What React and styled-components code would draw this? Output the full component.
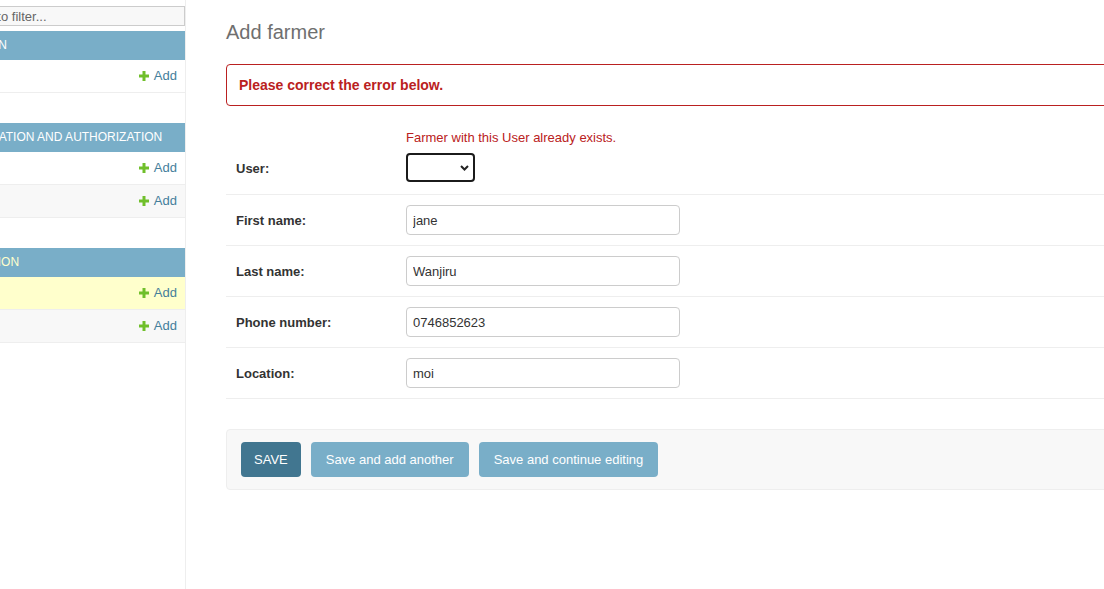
import { useLayoutEffect, useRef } from "react";
import styled, { createGlobalStyle } from "styled-components";

const GlobalStyle = createGlobalStyle`
  *, *::before, *::after {
    box-sizing: border-box;
  }
  html, body {
    margin: 0;
    padding: 0;
    background: #fff;
    overflow: hidden;
  }
  body {
    font-family: "Liberation Sans", Arial, sans-serif;
    font-size: 14px;
    color: #333;
  }
`;

// the page is scrolled sideways a bit, like the reference
const SCROLL_X = 78;

const Viewport = styled.div`
  width: 100vw;
  height: 100vh;
  overflow: hidden;
`;

const Page = styled.div`
  display: flex;
  width: 1500px;
  min-height: 100%;
`;

const Sidebar = styled.nav`
  flex: 0 0 264px;
  border-right: 1px solid #eee;
`;

const FilterInput = styled.input`
  display: block;
  width: 100%;
  height: 20px;
  margin: 6px 0 5px;
  padding: 2px 5px;
  border: 1px solid #ccc;
  background: #f8f8f8;
  font-family: inherit;
  font-size: 13px;
  color: #333;
  &::placeholder {
    color: #666;
  }
`;

const Module = styled.div`
  margin-bottom: 30px;
`;

const Caption = styled.div`
  padding: 8px;
  background: #79aec8;
  color: ${(p) => (p.current ? "#ffc" : "#fff")};
  font-size: 12px;
  line-height: 13px;
  text-transform: uppercase;
`;

const ModelRow = styled.div`
  display: flex;
  justify-content: space-between;
  align-items: center;
  padding: 8px;
  border-bottom: 1px solid #eee;
  background: ${(p) => (p.current ? "#ffc" : p.alt ? "#f8f8f8" : "#fff")};
  font-size: 13px;
  line-height: 16px;
`;

const ModelLink = styled.a`
  color: #447e9b;
  text-decoration: none;
`;

const AddLink = styled.a`
  display: flex;
  align-items: center;
  gap: 5px;
  color: #447e9b;
  text-decoration: none;
`;

const Main = styled.main`
  flex: 1;
  padding: 20px 40px;
`;

const Title = styled.h1`
  margin: 0 0 19px;
  font-size: 20px;
  line-height: 25px;
  font-weight: 300;
  color: #6f6f6f;
`;

const ErrorNote = styled.p`
  margin: 0 0 14px;
  padding: 10px 12px;
  border: 1px solid #ba2121;
  border-radius: 4px;
  color: #ba2121;
  font-size: 14px;
  line-height: 20px;
  font-weight: 700;
`;

const FormRow = styled.div`
  display: grid;
  grid-template-columns: 170px 1fr;
  align-items: center;
  padding: 10px;
  border-bottom: 1px solid #eee;
`;

const Label = styled.label`
  grid-column: 1;
  font-size: 13px;
  font-weight: 700;
  color: #333;
`;

const ErrorList = styled.div`
  grid-column: 2;
  margin: 0 0 7px;
  color: #ba2121;
  font-size: 13px;
  line-height: 16px;
`;

const TextInput = styled.input`
  width: 274px;
  height: 30px;
  padding: 5px 6px;
  border: 1px solid #ccc;
  border-radius: 4px;
  font-family: inherit;
  font-size: 13px;
  color: #333;
`;

const SelectBox = styled.div`
  position: relative;
  width: 69px;
  height: 29px;
  margin-bottom: 2px;
  > svg {
    position: absolute;
    right: 6px;
    top: 12px;
    pointer-events: none;
  }
`;

const Select = styled.select`
  appearance: none;
  width: 100%;
  height: 100%;
  border: 2px solid #1b1b1b;
  border-radius: 4px;
  background: #fff;
  font-family: inherit;
  font-size: 13px;
`;

const SubmitRow = styled.div`
  display: flex;
  gap: 10px;
  margin-top: 30px;
  padding: 12px 14px;
  background: #f8f8f8;
  border: 1px solid #eee;
  border-radius: 4px;
`;

const Button = styled.button`
  height: 35px;
  padding: 0 ${(p) => (p.primary ? "13px" : "15px")};
  border: none;
  border-radius: 4px;
  background: ${(p) => (p.primary ? "#417690" : "#79aec8")};
  color: #fff;
  font-family: inherit;
  font-size: 13px;
`;

const PlusIcon = () => (
  <svg width="10" height="10" viewBox="0 0 10 10">
    <path d="M3.5 0h3v3.5H10v3H6.5V10h-3V6.5H0v-3h3.5z" fill="#70bf2b" />
  </svg>
);

const apps = [
  { name: "Auth Token", models: ["Tokens"] },
  { name: "Authentication and Authorization", models: ["Groups", "Users"] },
  { name: "Registration", models: ["Farmers", "Produces"], current: 0 },
];

const fields = [
  { label: "First name:", value: "jane" },
  { label: "Last name:", value: "Wanjiru" },
  { label: "Phone number:", value: "0746852623" },
  { label: "Location:", value: "moi" },
];

function App() {
  const viewRef = useRef(null);

  useLayoutEffect(() => {
    if (viewRef.current) viewRef.current.scrollLeft = SCROLL_X;
  }, []);

  return (
    <Viewport ref={viewRef}>
      <GlobalStyle />
      <Page>
        <Sidebar>
          <FilterInput placeholder="Start typing to filter..." />
          {apps.map((app) => (
            <Module key={app.name}>
              <Caption current={app.current !== undefined}>{app.name}</Caption>
              {app.models.map((m, i) => (
                <ModelRow key={m} alt={i % 2 === 1} current={app.current === i}>
                  <ModelLink href="#">{m}</ModelLink>
                  <AddLink href="#">
                    <PlusIcon />
                    Add
                  </AddLink>
                </ModelRow>
              ))}
            </Module>
          ))}
        </Sidebar>

        <Main>
          <Title>Add farmer</Title>
          <ErrorNote>Please correct the error below.</ErrorNote>
          <form onSubmit={(e) => e.preventDefault()}>
            <FormRow>
              <ErrorList>Farmer with this User already exists.</ErrorList>
              <Label>User:</Label>
              <SelectBox>
                <Select defaultValue="">
                  <option value=""></option>
                </Select>
                <svg width="9" height="6" viewBox="0 0 9 6">
                  <path d="M1 1l3.5 3.5L8 1" fill="none" stroke="#222" strokeWidth="2" />
                </svg>
              </SelectBox>
            </FormRow>
            {fields.map((f) => (
              <FormRow key={f.label}>
                <Label>{f.label}</Label>
                <TextInput defaultValue={f.value} />
              </FormRow>
            ))}
            <SubmitRow>
              <Button primary>SAVE</Button>
              <Button>Save and add another</Button>
              <Button>Save and continue editing</Button>
            </SubmitRow>
          </form>
        </Main>
      </Page>
    </Viewport>
  );
}

export default App;
